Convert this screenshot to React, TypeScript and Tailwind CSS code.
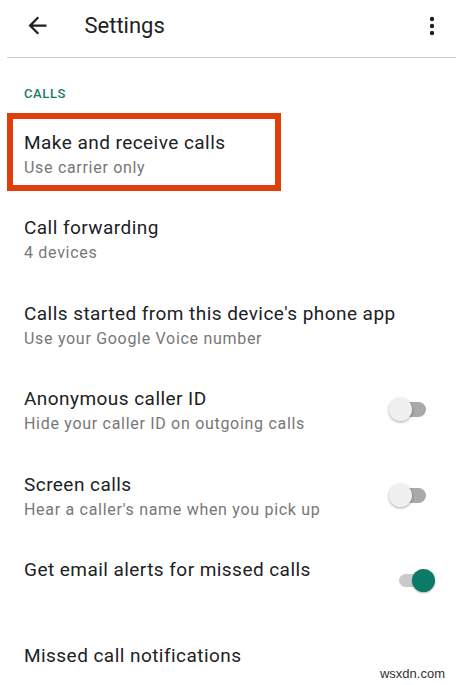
import React from 'react';

type Row = { title: string; sub?: string; toggle?: 'on' | 'off' };

const rows: Row[] = [
  { title: 'Make and receive calls', sub: 'Use carrier only' },
  { title: 'Call forwarding', sub: '4 devices' },
  { title: "Calls started from this device's phone app", sub: 'Use your Google Voice number' },
  { title: 'Anonymous caller ID', sub: 'Hide your caller ID on outgoing calls', toggle: 'off' },
  { title: 'Screen calls', sub: "Hear a caller's name when you pick up", toggle: 'off' },
  { title: 'Get email alerts for missed calls', toggle: 'on' },
  { title: 'Missed call notifications' },
];

function Toggle({ on }: { on: boolean }) {
  if (on) {
    return (
      <div className="flex items-center w-[46px] h-[23px] pl-[10px]">
        <div className="w-[30px] h-[13px] rounded-full bg-[#c9cbca] shrink-0" />
        <div className="relative -ml-[17px] w-[23px] h-[23px] rounded-full bg-[#0b7a68] shadow-[0_1px_2px_rgba(0,0,0,0.3)] shrink-0" />
      </div>
    );
  }
  return (
    <div className="flex items-center w-[46px] h-[23px]">
      <div className="relative z-10 w-[23px] h-[23px] rounded-full bg-[#f0f0f0] shadow-[0_1px_3px_rgba(0,0,0,0.35)] shrink-0" />
      <div className="-ml-[18px] w-[32px] h-[15px] rounded-full bg-[#a9a9a9] shrink-0" />
    </div>
  );
}

export default function App() {
  return (
    <div className="relative w-[456px] h-[685px] overflow-hidden bg-white" style={{ fontFamily: 'Roboto, "Liberation Sans", sans-serif' }}>
      <header className="h-[58px] flex items-center ml-[7px] border-b border-[#cfcfcf]">
        <svg width="27" height="27" viewBox="0 0 24 24" className="ml-[16.5px] mb-[7px] fill-[#202124]">
          <path d="M20 11H7.83l5.59-5.59L12 4l-8 8 8 8 1.41-1.41L7.83 13H20v-2z" />
        </svg>
        <span className="ml-[34px] mb-[6px] text-[22px] leading-[28px] text-[#202124]">Settings</span>
        <svg width="8" height="20" viewBox="0 0 8 20" className="ml-auto mr-[20px] mb-[6px] fill-[#202124]">
          <circle cx="4" cy="3" r="2.2" />
          <circle cx="4" cy="10" r="2.2" />
          <circle cx="4" cy="17" r="2.2" />
        </svg>
      </header>

      <div className="h-[53px] pt-[27.5px] pl-[24px]">
        <div className="text-[13px] leading-[16px] font-medium tracking-[0.6px] text-[#1a7a66]">CALLS</div>
      </div>

      <main className="flex flex-col">
        {rows.map((row, i) => (
          <div key={row.title} className="relative h-[85.5px] pt-[19.5px] pl-[24px] pr-[21px] flex items-start">
            {i === 0 && (
              <div className="absolute left-[7px] top-[2px] w-[274px] h-[78px] border-[6.5px] border-[#e03e0c]" />
            )}
            <div className="flex-1">
              <div className="text-[19px] leading-[24px] tracking-[0.45px] text-[#202124]">{row.title}</div>
              {row.sub && (
                <div className="mt-[3px] text-[16px] leading-[20px] tracking-[0.7px] text-[#777777]">{row.sub}</div>
              )}
            </div>
            {row.toggle && (
              <div className="mt-[11px]">
                <Toggle on={row.toggle === 'on'} />
              </div>
            )}
          </div>
        ))}
      </main>

      <div className="absolute right-[11px] bottom-[3px] text-[13px] leading-[16px] text-[#333]" style={{ fontFamily: '"Liberation Sans", Arial, sans-serif' }}>
        wsxdn.com
      </div>
    </div>
  );
}
